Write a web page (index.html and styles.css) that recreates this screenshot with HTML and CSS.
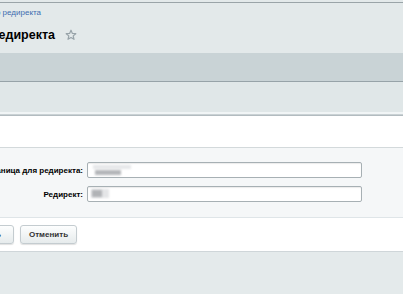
FILE: index.html
```html
<!DOCTYPE html>
<html lang="ru">
<head>
  <meta charset="UTF-8" />
  <meta name="viewport" content="width=device-width, initial-scale=1.0"/>
  <title>Редирект</title>
  <link rel="stylesheet" href="styles.css">
</head>
<body>
  <div class="top"></div>

  <div class="header">
    <div class="crumbs">
      <div class="edge-right crumb-box"><a href="#">Мастер редиректа</a></div>
    </div>
    <div class="title-row">
      <div class="edge-right title-box"><h1>Параметры редиректа</h1></div>
      <svg class="star" width="12" height="12" viewBox="0 0 12 12">
        <path d="M6 1.2 L7.4 4.4 L10.8 4.7 L8.2 6.9 L9 10.3 L6 8.5 L3 10.3 L3.8 6.9 L1.2 4.7 L4.6 4.4 Z" fill="none" stroke="#98a3a9" stroke-width="1.2" stroke-linejoin="round"/>
      </svg>
    </div>
  </div>

  <div class="toolbar"></div>
  <div class="tabs"></div>
  <div class="tabs-edge"></div>

  <div class="blank"></div>

  <div class="form">
    <div class="row">
      <div class="label edge-right">Страница для редиректа:</div>
      <div class="field">
        <span class="blur blur-a"></span>
        <span class="blur blur-b"></span>
      </div>
    </div>
    <div class="row">
      <div class="label edge-right">Редирект:</div>
      <div class="field">
        <span class="blur blur-c"></span>
        <span class="blur blur-d"></span>
      </div>
    </div>
  </div>

  <div class="buttons">
    <div class="edge-right btn-clip"><button>Сохранить</button></div>
    <button class="cancel">Отменить</button>
  </div>

  <div class="bottom"></div>
</body>
</html>
```

FILE: styles.css
```css
:root {
  --page-bg: #e3e9ea;
  --band-bg: #c9d3d6;
  --tab-bg: #e0e7e8;
  --form-bg: #f5f7f8;
  --line: #9aa4a8;
  --text: #000;
  --link: #3d6db0;
}
body {
  margin: 0;
  font-family: 'Liberation Sans', Arial, sans-serif;
  background-color: var(--page-bg);
  color: var(--text);
  overflow: hidden;
}
.edge-right {
  display: flex;
  justify-content: flex-end;
  white-space: nowrap;
}
.top {
  height: 2px;
  border-bottom: 1px solid var(--line);
}
.header {
  height: 50px;
  background-color: var(--page-bg);
}
.crumbs {
  padding-top: 5px;
  height: 10px;
}
.crumb-box {
  width: 41px;
  font-size: 8px;
  line-height: 10px;
}
.crumb-box a {
  color: var(--link);
  text-decoration: none;
}
.title-row {
  display: flex;
  align-items: center;
  margin-top: 10px;
  height: 14px;
}
.title-box { width: 55px; }
h1 {
  margin: 0;
  font-size: 12.5px;
  line-height: 14px;
  font-weight: bold;
}
.star { margin-left: 10px; }
.toolbar {
  height: 28px;
  background-color: var(--band-bg);
  border-bottom: 1px solid #97a3a8;
}
.tabs {
  height: 30px;
  background-color: var(--tab-bg);
  border-bottom: 2px solid #f1f5f6;
}
.tabs-edge {
  height: 1px;
  border-top: 1px solid #c9d1d4;
  background-color: #b3bcc0;
}
.blank {
  height: 31px;
  background-color: #fff;
  border-bottom: 1px solid #d3d9db;
}
.form {
  background-color: var(--form-bg);
  padding: 14px 0 15px;
  display: flex;
  flex-direction: column;
  gap: 8px;
  border-bottom: 1px solid #dfe5e8;
}
.row {
  display: flex;
  align-items: center;
  gap: 4px;
}
.label {
  width: 83px;
  font-size: 8px;
  font-weight: bold;
}
.field {
  position: relative;
  width: 273px;
  height: 14px;
  background-color: #fff;
  border: 1px solid #a7b0b4;
  border-radius: 2px;
  box-shadow: inset 0 1px 1px rgba(0,0,0,0.08);
}
.blur {
  position: absolute;
  filter: blur(1.2px);
}
.blur-a { left: 5px; top: 2px; width: 38px; height: 4px; background-color: #e6e7e9; }
.blur-b { left: 7px; top: 7px; width: 26px; height: 5px; background-color: #b4b6b9; }
.blur-c { left: 3px; top: 2px; width: 18px; height: 9px; background-color: #e4e5e7; }
.blur-d { left: 4px; top: 3px; width: 10px; height: 7px; background-color: #b1b3b6; }
.buttons {
  display: flex;
  align-items: center;
  gap: 6px;
  height: 33px;
  background-color: #fff;
  border-bottom: 1px solid #cfd6d9;
}
.btn-clip { width: 14px; }
button {
  height: 19px;
  padding: 0 12px;
  font-family: 'Liberation Sans', Arial, sans-serif;
  font-size: 8px;
  font-weight: bold;
  color: #333;
  background: linear-gradient(#fdfefe, #e6ebec);
  border: 1px solid #c4ccd0;
  border-radius: 3px;
  box-shadow: 0 1px 1px rgba(0,0,0,0.12);
}
.cancel { width: 57px; padding: 0; }
.bottom {
  height: 42px;
  background-color: #e4eaeb;
}
```
